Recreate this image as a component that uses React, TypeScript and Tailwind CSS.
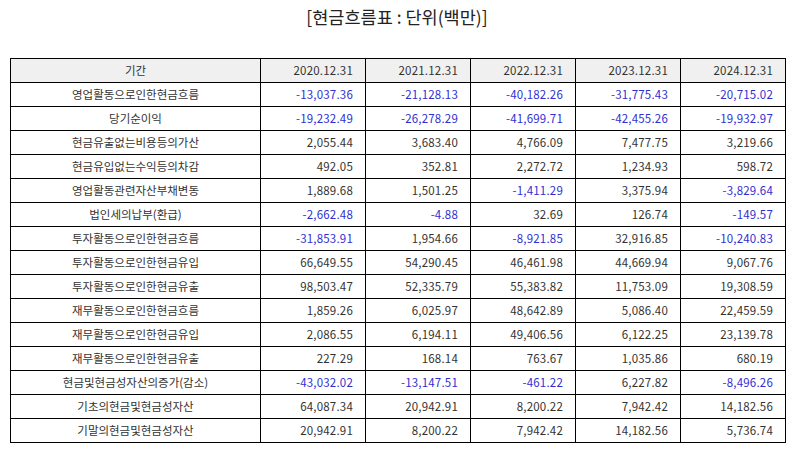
import React from "react";

type Row = [string, string[]];

const rows: Row[] = [
  ["영업활동으로인한현금흐름", ["-13,037.36", "-21,128.13", "-40,182.26", "-31,775.43", "-20,715.02"]],
  ["당기순이익", ["-19,232.49", "-26,278.29", "-41,699.71", "-42,455.26", "-19,932.97"]],
  ["현금유출없는비용등의가산", ["2,055.44", "3,683.40", "4,766.09", "7,477.75", "3,219.66"]],
  ["현금유입없는수익등의차감", ["492.05", "352.81", "2,272.72", "1,234.93", "598.72"]],
  ["영업활동관련자산부채변동", ["1,889.68", "1,501.25", "-1,411.29", "3,375.94", "-3,829.64"]],
  ["법인세의납부(환급)", ["-2,662.48", "-4.88", "32.69", "126.74", "-149.57"]],
  ["투자활동으로인한현금흐름", ["-31,853.91", "1,954.66", "-8,921.85", "32,916.85", "-10,240.83"]],
  ["투자활동으로인한현금유입", ["66,649.55", "54,290.45", "46,461.98", "44,669.94", "9,067.76"]],
  ["투자활동으로인한현금유출", ["98,503.47", "52,335.79", "55,383.82", "11,753.09", "19,308.59"]],
  ["재무활동으로인한현금흐름", ["1,859.26", "6,025.97", "48,642.89", "5,086.40", "22,459.59"]],
  ["재무활동으로인한현금유입", ["2,086.55", "6,194.11", "49,406.56", "6,122.25", "23,139.78"]],
  ["재무활동으로인한현금유출", ["227.29", "168.14", "763.67", "1,035.86", "680.19"]],
  ["현금및현금성자산의증가(감소)", ["-43,032.02", "-13,147.51", "-461.22", "6,227.82", "-8,496.26"]],
  ["기초의현금및현금성자산", ["64,087.34", "20,942.91", "8,200.22", "7,942.42", "14,182.56"]],
  ["기말의현금및현금성자산", ["20,942.91", "8,200.22", "7,942.42", "14,182.56", "5,736.74"]],
];

const years = ["2020.12.31", "2021.12.31", "2022.12.31", "2023.12.31", "2024.12.31"];

export default function App() {
  return (
    <div
      className="w-[794px] h-[452px] bg-white overflow-hidden"
      style={{ fontFamily: '"Noto Sans CJK KR", "Noto Sans", sans-serif' }}
    >
      <div className="pt-[4px] h-[58px] text-center text-[17.5px] leading-[26px] text-[#222]">
        [현금흐름표 : 단위(백만)]
      </div>
      <table className="ml-[10px] w-[775px] table-fixed border-collapse text-[11.5px] text-[#333]">
        <colgroup>
          <col className="w-[250px]" />
          <col className="w-[105px]" />
          <col className="w-[105px]" />
          <col className="w-[105px]" />
          <col className="w-[105px]" />
          <col className="w-[105px]" />
        </colgroup>
        <thead>
          <tr className="h-[24px] bg-[#f0f0f0]">
            <th className="border border-black font-normal text-center p-0">기간</th>
            {years.map((y) => (
              <th key={y} className="border border-black font-normal text-right pr-[12px] p-0 tracking-[0.2px]">
                {y}
              </th>
            ))}
          </tr>
        </thead>
        <tbody>
          {rows.map(([label, vals]) => (
            <tr key={label} className="h-[24px]">
              <td className="border border-black text-center p-0">{label}</td>
              {vals.map((v, i) => (
                <td
                  key={i}
                  className={
                    v.startsWith("-")
                      ? "border border-black text-right pr-[12px] p-0 tracking-[0.2px] text-[#2f2fd2]"
                      : "border border-black text-right pr-[12px] p-0 tracking-[0.2px]"
                  }
                >
                  {v}
                </td>
              ))}
            </tr>
          ))}
        </tbody>
      </table>
    </div>
  );
}
